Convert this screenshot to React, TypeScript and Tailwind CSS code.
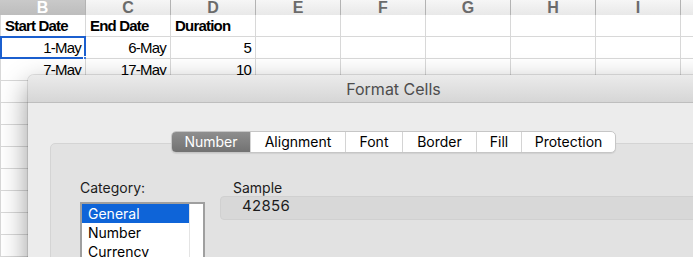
import React from "react";

const cols = ["B", "C", "D", "E", "F", "G", "H", "I", "J"];

const rows: string[][] = [
  ["Start Date", "End Date", "Duration", "", "", "", "", "", ""],
  ["1-May", "6-May", "5", "", "", "", "", "", ""],
  ["7-May", "17-May", "10", "", "", "", "", "", ""],
];

const tabs = [
  { name: "Number", w: "w-[78px]" },
  { name: "Alignment", w: "w-[95px]" },
  { name: "Font", w: "w-[57px]" },
  { name: "Border", w: "w-[74px]" },
  { name: "Fill", w: "w-[45px]" },
  { name: "Protection", w: "w-[94px]" },
];

function Sheet() {
  const empty = Array.from({ length: 9 }, () => Array(9).fill(""));
  const all = [...rows, ...empty];
  return (
    <div className="font-['Liberation_Sans',Arial,sans-serif] text-[15px] tracking-[-0.8px] text-black">
      {/* column headers */}
      <div className="grid grid-cols-[86px_85px_85px_85px_85px_85px_85px_85px_85px] h-[15px] overflow-hidden">
        {cols.map((c, i) => (
          <div
            key={c}
            className={`flex items-end justify-center pb-[4px] border-r border-b border-[#b3b3b3] font-bold text-[16px] tracking-normal leading-[16px] ${
              i === 0
                ? "bg-gradient-to-b from-[#c9c9c9] to-[#b9b9b9] text-white"
                : "bg-gradient-to-b from-[#f6f6f6] to-[#e4e4e4] text-[#6b6b6b]"
            }`}
          >
            {c}
          </div>
        ))}
      </div>
      {all.map((r, ri) => (
        <div
          key={ri}
          className="grid grid-cols-[86px_85px_85px_85px_85px_85px_85px_85px_85px] h-[22px]"
        >
          {r.map((v, ci) => (
            <div
              key={ci}
              className={`relative flex items-center border-r border-b border-[#d8d8d8] bg-white leading-[15px] ${
                ci === 0 ? "border-l" : ""
              } ${ri === 0 ? "font-bold pl-[4px]" : "justify-end pr-[4px]"}`}
            >
              {v}
              {ri === 1 && ci === 0 && (
                <>
                  <div className="absolute -left-px -top-px right-[-1px] bottom-[-1px] border-2 border-[#1b5fcf]" />
                  <div className="absolute right-[-4px] bottom-[-4px] w-[6px] h-[6px] bg-[#3b7be0] border border-white" />
                </>
              )}
            </div>
          ))}
        </div>
      ))}
    </div>
  );
}

function Dialog() {
  return (
    <div className="absolute left-[28px] top-[75px] w-[731px] h-[220px] rounded-t-[6px] bg-[#ececec] shadow-[0_10px_28px_rgba(0,0,0,0.42),0_0_0_1px_rgba(0,0,0,0.1)] overflow-hidden font-['Inter',sans-serif]">
      <div className="h-[28px] flex items-center justify-center bg-gradient-to-b from-[#ebebeb] to-[#d6d6d6] border-b border-[#bebebe] text-[16px] text-[#4d4d4d]">
        Format Cells
      </div>
      <div className="pt-[28px] px-[22px]">
        <div className="relative z-10 flex justify-center">
          <div className="flex h-[22px] rounded-[5px] border border-[#c6c6c6] bg-white text-[14px] text-black shadow-[0_1px_1px_rgba(0,0,0,0.08)] overflow-hidden">
            {tabs.map((t, i) => (
              <div
                key={t.name}
                className={`${t.w} flex items-center justify-center leading-[16px] ${
                  i === 0
                    ? "bg-gradient-to-b from-[#8e8e8e] to-[#727272] text-white"
                    : "border-l border-[#d4d4d4]"
                }`}
              >
                {t.name}
              </div>
            ))}
          </div>
        </div>
        <div className="-mt-[10px] h-[200px] rounded-[5px] bg-[#e2e2e2] border border-[#d4d4d4] flex pt-[35px] pl-[29px] pr-[30px] text-[14px] leading-[17px] text-[#1c1c1c]">
          <div className="w-[125px] shrink-0">
            <div>Category:</div>
            <div className="mt-[6px] w-[125px] h-[80px] border-2 border-[#9f9f9f] bg-white flex">
              <div className="flex-1">
                <div className="h-[19px] bg-[#0e64d8] text-white pl-[6px] leading-[19px]">General</div>
                <div className="h-[19px] pl-[6px] leading-[19px] text-black">Number</div>
                <div className="h-[19px] pl-[6px] leading-[19px] text-black">Currency</div>
              </div>
              <div className="w-[14px] border-l border-[#e4e4e4] bg-white" />
            </div>
          </div>
          <div className="flex-1 ml-[15px]">
            <div className="pl-[13px]">Sample</div>
            <div className="h-[24px] rounded-[4px] bg-[#d8d8d8] border border-[#d0d0d0] pl-[21px] text-[15px] tracking-[0.3px] text-[#1c1c1c]">
              42856
            </div>
          </div>
        </div>
      </div>
    </div>
  );
}

export default function App() {
  return (
    <div className="relative w-[693px] h-[257px] overflow-hidden bg-white">
      <Sheet />
      <Dialog />
    </div>
  );
}
